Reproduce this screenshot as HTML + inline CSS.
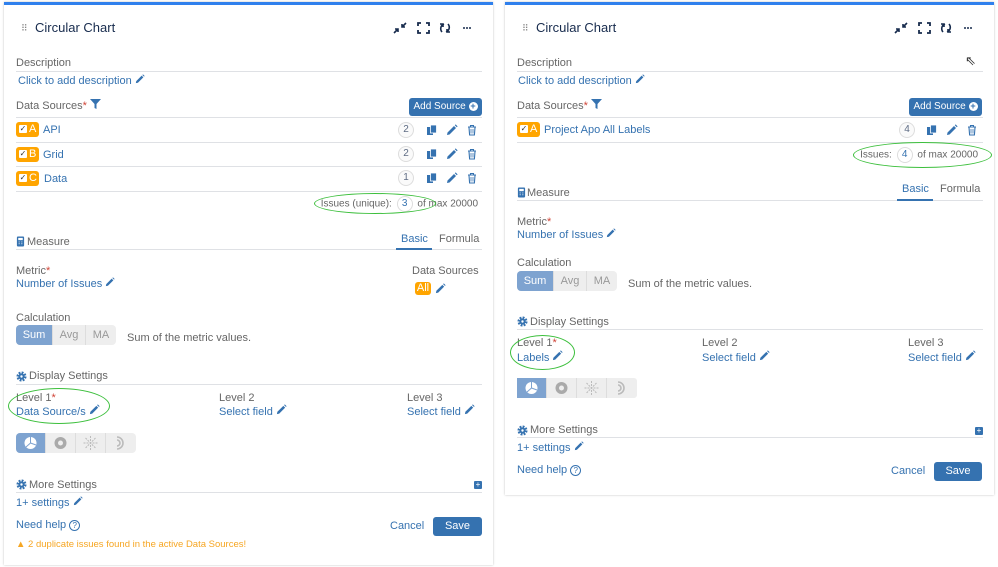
<!DOCTYPE html>
<html><head><meta charset="utf-8">
<style>
body{margin:0;width:998px;height:567px;background:#fff;position:relative;overflow:hidden;font-family:"Liberation Sans",sans-serif;}
.p{position:absolute;background:#fff;border-top:3px solid #2f80ed;box-shadow:0 0 2px rgba(0,0,0,.25);}
.t{position:absolute;font-size:11px;line-height:14px;color:#666;white-space:nowrap;}
.l{color:#3572b0;}
.ln{position:absolute;height:1px;background:#dfe1e5;}
.title{position:absolute;font-size:13px;color:#172b4d;line-height:16px;}
.btn{position:absolute;background:#3572b0;color:#fff;font-size:10px;border-radius:3px;text-align:center;white-space:nowrap;}
.badge{position:absolute;background:#ffa500;border-radius:3px;height:15px;color:#fff;font-size:11px;line-height:15px;}
.badge i{position:absolute;left:3px;top:3px;width:8px;height:8px;background:#fff;border-radius:1px;font-style:normal;color:#333;font-size:8px;line-height:8px;text-align:center;}
.badge b{position:absolute;left:13px;top:0;font-weight:normal;}
.cnt{position:absolute;width:14px;height:14px;border:1px solid #ddd;border-radius:50%;font-size:10px;line-height:14px;text-align:center;color:#5e6c84;background:#fafafa;}
.ell{position:absolute;border:1.5px solid #3cbf3c;border-radius:50%;}
.seg{position:absolute;height:20px;background:#eee;border-radius:4px;overflow:hidden;font-size:11px;color:#999;line-height:20px;}
.seg span{float:left;text-align:center;border-right:1px solid #ddd;height:20px;}
.seg .on{background:#7ea3d0;color:#fff;}
.ic{position:absolute;}
.red{color:#d04437;}
.iss{position:absolute;font-size:10px;line-height:14px;color:#666;white-space:nowrap;text-align:right;}
.iss span{display:inline-block;width:14px;height:14px;border:1px solid #ddd;border-radius:50%;text-align:center;color:#3572b0;vertical-align:middle;margin:0 2px;}
</style></head><body>

<svg width="0" height="0" style="position:absolute">
<defs>
<symbol id="pen" viewBox="0 0 12 12"><path d="M1 11 L1.5 8.5 L8 2 L10 4 L3.5 10.5 Z M8.8 1.2 L9.6 0.4 L11.6 2.4 L10.8 3.2 Z" fill="#3572b0"/></symbol>
<symbol id="copy" viewBox="0 0 12 12"><rect x="1" y="3" width="6" height="8" fill="#3572b0"/><rect x="4.5" y="1" width="6" height="8" fill="#3572b0" stroke="#fff" stroke-width="0.8"/></symbol>
<symbol id="trash" viewBox="0 0 12 12"><path d="M2 3h8M4.5 3V1.5h3V3M3 3.5l.6 7.5h4.8l.6-7.5" fill="none" stroke="#3572b0" stroke-width="1.1"/><path d="M5 5v4.5M7 5v4.5" stroke="#3572b0" stroke-width=".8"/></symbol>
<symbol id="gear" viewBox="0 0 12 12"><circle cx="6" cy="6" r="4.2" fill="none" stroke="#3572b0" stroke-width="2.6" stroke-dasharray="2 1.3"/><circle cx="6" cy="6" r="3.4" fill="#3572b0"/><circle cx="6" cy="6" r="1.3" fill="#fff"/></symbol>
<symbol id="calc" viewBox="0 0 10 12"><rect x="1" y="0.5" width="8" height="11" rx="1" fill="#3572b0"/><rect x="2.5" y="2" width="5" height="2.5" fill="#fff"/><path d="M3 6.5h1M6 6.5h1M3 8.5h1M6 8.5h1" stroke="#fff"/></symbol>
<symbol id="hdr" viewBox="0 0 90 14">
<path d="M2 12 L6 8 M3 8 L6 8 L6 11 M14 2 L10 6 M13 6 L10 6 L10 3" stroke="#172b4d" stroke-width="1.6" fill="none"/>
<path d="M26 5V2h3M34 2h3v3M37 9v3h-3M29 12h-3V9" stroke="#172b4d" stroke-width="1.8" fill="none"/>
<path d="M52 3a5 5 0 0 0-2 8M48 3h3v3M54 11a5 5 0 0 0 2-8M58 11h-3V8" stroke="#172b4d" stroke-width="1.6" fill="none"/>
<circle cx="72" cy="7" r="1" fill="#172b4d"/><circle cx="75" cy="7" r="1" fill="#172b4d"/><circle cx="78" cy="7" r="1" fill="#172b4d"/>
</symbol>
<symbol id="charts" viewBox="0 0 120 20">
<rect width="29" height="20" fill="#7ea3d0"/>
<circle cx="14.5" cy="10" r="6" fill="#fff"/><path d="M14.5 10V4M14.5 10L20 12M14.5 10L10 14" stroke="#7ea3d0" stroke-width="1"/>
<circle cx="44.5" cy="10" r="6" fill="#aaa"/><circle cx="44.5" cy="10" r="2.5" fill="#eee"/>
<path d="M74.5 3v14M67.5 10h14M69.5 5l10 10M79.5 5l-10 10" stroke="#bbb" stroke-width="1" stroke-dasharray="2 1"/>
<path d="M101 4a6 6 0 0 1 0 12M101 7a3 3 0 0 1 0 6" stroke="#bbb" stroke-width="1.6" fill="none"/>
<path d="M29.5 0v20M59.5 0v20M89.5 0v20" stroke="#ddd"/>
</symbol>
</defs></svg>

<!-- LEFT PANEL -->
<div class="p" style="left:4px;top:2px;width:489px;height:560px;"></div>
<div class="t" style="left:21px;top:21px;color:#888;font-size:9px;">⠿</div>
<div class="title" style="left:35px;top:20px;">Circular Chart</div>
<svg class="ic" style="left:392px;top:21px" width="90" height="14"><use href="#hdr"/></svg>

<div class="t" style="left:16px;top:56px;">Description</div>
<div class="ln" style="left:16px;top:71px;width:466px;"></div>
<div class="t l" style="left:18px;top:74px;">Click to add description <svg width="10" height="10"><use href="#pen"/></svg></div>

<div class="t" style="left:16px;top:99px;">Data Sources<span class="red">*</span> <svg width="11" height="10" viewBox="0 0 11 10"><path d="M0 0h11L6.5 5v5L4.5 9V5z" fill="#3572b0"/></svg></div>
<div class="btn" style="left:409px;top:98px;width:73px;height:18px;line-height:18px;">Add Source <span style="display:inline-block;width:9px;height:9px;border-radius:50%;background:#fff;color:#3572b0;font-size:9px;line-height:9px;font-weight:bold;">+</span></div>
<div class="ln" style="left:16px;top:117px;width:466px;"></div>

<div class="badge" style="left:16px;top:122px;width:23px;"><i>✓</i><b>A</b></div>
<div class="t l" style="left:43px;top:123px;">API</div>
<div class="cnt" style="left:398px;top:122px;">2</div>
<svg class="ic" style="left:426px;top:124px" width="12" height="12"><use href="#copy"/></svg>
<svg class="ic" style="left:446px;top:124px" width="12" height="12"><use href="#pen"/></svg>
<svg class="ic" style="left:466px;top:124px" width="12" height="12"><use href="#trash"/></svg>
<div class="ln" style="left:16px;top:142px;width:466px;"></div>

<div class="badge" style="left:16px;top:147px;width:23px;"><i>✓</i><b>B</b></div>
<div class="t l" style="left:43px;top:148px;">Grid</div>
<div class="cnt" style="left:398px;top:146px;">2</div>
<svg class="ic" style="left:426px;top:148px" width="12" height="12"><use href="#copy"/></svg>
<svg class="ic" style="left:446px;top:148px" width="12" height="12"><use href="#pen"/></svg>
<svg class="ic" style="left:466px;top:148px" width="12" height="12"><use href="#trash"/></svg>
<div class="ln" style="left:16px;top:166px;width:466px;"></div>

<div class="badge" style="left:16px;top:171px;width:23px;"><i>✓</i><b>C</b></div>
<div class="t l" style="left:44px;top:172px;">Data</div>
<div class="cnt" style="left:398px;top:170px;">1</div>
<svg class="ic" style="left:426px;top:172px" width="12" height="12"><use href="#copy"/></svg>
<svg class="ic" style="left:446px;top:172px" width="12" height="12"><use href="#pen"/></svg>
<svg class="ic" style="left:466px;top:172px" width="12" height="12"><use href="#trash"/></svg>
<div class="ln" style="left:16px;top:191px;width:466px;"></div>

<div class="iss" style="right:520px;top:196px;">Issues (unique): <span>3</span> of max 20000</div>
<div class="ell" style="left:314px;top:193px;width:120px;height:19px;"></div>

<svg class="ic" style="left:16px;top:236px" width="9" height="11"><use href="#calc"/></svg>
<div class="t" style="left:27px;top:235px;">Measure</div>
<div class="t l" style="left:401px;top:232px;">Basic</div>
<div class="t" style="left:439px;top:232px;">Formula</div>
<div class="ln" style="left:16px;top:249px;width:466px;"></div>
<div style="position:absolute;left:396px;top:248px;width:36px;height:2px;background:#3572b0;"></div>

<div class="t" style="left:16px;top:264px;">Metric<span class="red">*</span></div>
<div class="t l" style="left:16px;top:277px;">Number of Issues <svg width="10" height="10"><use href="#pen"/></svg></div>
<div class="t" style="left:412px;top:264px;">Data Sources</div>
<div class="badge" style="left:415px;top:282px;width:16px;height:13px;line-height:13px;text-align:center;">All</div>
<svg class="ic" style="left:435px;top:283px" width="11" height="11"><use href="#pen"/></svg>

<div class="t" style="left:16px;top:311px;">Calculation</div>
<div class="seg" style="left:16px;top:325px;width:100px;"><span class="on" style="width:36px">Sum</span><span style="width:32px">Avg</span><span style="width:30px;border:0">MA</span></div>
<div class="t" style="left:127px;top:331px;">Sum of the metric values.</div>

<svg class="ic" style="left:16px;top:371px" width="11" height="11"><use href="#gear"/></svg>
<div class="t" style="left:29px;top:369px;">Display Settings</div>
<div class="ln" style="left:16px;top:384px;width:466px;"></div>
<div class="t" style="left:16px;top:391px;">Level 1<span class="red">*</span></div>
<div class="t l" style="left:16px;top:404px;">Data Source/s <svg width="11" height="11"><use href="#pen"/></svg></div>
<div class="ell" style="left:8px;top:388px;width:100px;height:34px;"></div>
<div class="t" style="left:219px;top:391px;">Level 2</div>
<div class="t l" style="left:219px;top:404px;">Select field <svg width="11" height="11"><use href="#pen"/></svg></div>
<div class="t" style="left:407px;top:391px;">Level 3</div>
<div class="t l" style="left:407px;top:404px;">Select field <svg width="11" height="11"><use href="#pen"/></svg></div>
<svg class="ic" style="left:16px;top:433px;border-radius:4px" width="120" height="20"><rect width="120" height="20" fill="#eee" rx="3"/><use href="#charts"/></svg>

<svg class="ic" style="left:16px;top:479px" width="11" height="11"><use href="#gear"/></svg>
<div class="t" style="left:29px;top:478px;">More Settings</div>
<div style="position:absolute;left:474px;top:481px;width:8px;height:8px;background:#3572b0;border-radius:1px;color:#fff;font-size:8px;line-height:8px;text-align:center;">+</div>
<div class="ln" style="left:16px;top:492px;width:466px;"></div>
<div class="t l" style="left:16px;top:496px;">1+ settings <svg width="10" height="10"><use href="#pen"/></svg></div>
<div class="t l" style="left:16px;top:518px;">Need help <span style="display:inline-block;width:9px;height:9px;border:1px solid #3572b0;border-radius:50%;font-size:8px;line-height:9px;text-align:center;">?</span></div>
<div class="t l" style="left:390px;top:519px;">Cancel</div>
<div class="btn" style="left:433px;top:517px;width:49px;height:19px;line-height:19px;font-size:11px;">Save</div>
<div class="t" style="left:16px;top:538px;color:#f6a623;font-size:9.5px;">▲ 2 duplicate issues found in the active Data Sources!</div>

<!-- RIGHT PANEL -->
<div class="p" style="left:505px;top:2px;width:489px;height:490px;"></div>
<div class="t" style="left:522px;top:21px;color:#888;font-size:9px;">⠿</div>
<div class="title" style="left:536px;top:20px;">Circular Chart</div>
<svg class="ic" style="left:893px;top:21px" width="90" height="14"><use href="#hdr"/></svg>
<div class="t" style="left:965px;top:54px;color:#333;font-size:13px;">⇖</div>

<div class="t" style="left:517px;top:56px;">Description</div>
<div class="ln" style="left:517px;top:71px;width:466px;"></div>
<div class="t l" style="left:518px;top:74px;">Click to add description <svg width="10" height="10"><use href="#pen"/></svg></div>

<div class="t" style="left:517px;top:99px;">Data Sources<span class="red">*</span> <svg width="11" height="10" viewBox="0 0 11 10"><path d="M0 0h11L6.5 5v5L4.5 9V5z" fill="#3572b0"/></svg></div>
<div class="btn" style="left:909px;top:98px;width:73px;height:18px;line-height:18px;">Add Source <span style="display:inline-block;width:9px;height:9px;border-radius:50%;background:#fff;color:#3572b0;font-size:9px;line-height:9px;font-weight:bold;">+</span></div>
<div class="ln" style="left:517px;top:117px;width:466px;"></div>

<div class="badge" style="left:517px;top:122px;width:23px;"><i>✓</i><b>A</b></div>
<div class="t l" style="left:544px;top:123px;">Project Apo All Labels</div>
<div class="cnt" style="left:899px;top:122px;">4</div>
<svg class="ic" style="left:926px;top:124px" width="12" height="12"><use href="#copy"/></svg>
<svg class="ic" style="left:946px;top:124px" width="12" height="12"><use href="#pen"/></svg>
<svg class="ic" style="left:966px;top:124px" width="12" height="12"><use href="#trash"/></svg>
<div class="ln" style="left:517px;top:142px;width:466px;"></div>

<div class="iss" style="right:20px;top:147px;">Issues: <span>4</span> of max 20000</div>
<div class="ell" style="left:853px;top:142px;width:137px;height:24px;"></div>

<svg class="ic" style="left:517px;top:187px" width="9" height="11"><use href="#calc"/></svg>
<div class="t" style="left:527px;top:186px;">Measure</div>
<div class="t l" style="left:902px;top:182px;">Basic</div>
<div class="t" style="left:940px;top:182px;">Formula</div>
<div class="ln" style="left:517px;top:200px;width:466px;"></div>
<div style="position:absolute;left:897px;top:199px;width:36px;height:2px;background:#3572b0;"></div>

<div class="t" style="left:517px;top:215px;">Metric<span class="red">*</span></div>
<div class="t l" style="left:517px;top:228px;">Number of Issues <svg width="10" height="10"><use href="#pen"/></svg></div>

<div class="t" style="left:517px;top:256px;">Calculation</div>
<div class="seg" style="left:517px;top:271px;width:100px;"><span class="on" style="width:36px">Sum</span><span style="width:32px">Avg</span><span style="width:30px;border:0">MA</span></div>
<div class="t" style="left:628px;top:277px;">Sum of the metric values.</div>

<svg class="ic" style="left:517px;top:316px" width="11" height="11"><use href="#gear"/></svg>
<div class="t" style="left:530px;top:315px;">Display Settings</div>
<div class="ln" style="left:517px;top:329px;width:466px;"></div>
<div class="t" style="left:517px;top:336px;">Level 1<span class="red">*</span></div>
<div class="t l" style="left:517px;top:350px;">Labels <svg width="11" height="11"><use href="#pen"/></svg></div>
<div class="ell" style="left:510px;top:335px;width:63px;height:33px;"></div>
<div class="t" style="left:702px;top:336px;">Level 2</div>
<div class="t l" style="left:702px;top:350px;">Select field <svg width="11" height="11"><use href="#pen"/></svg></div>
<div class="t" style="left:908px;top:336px;">Level 3</div>
<div class="t l" style="left:908px;top:350px;">Select field <svg width="11" height="11"><use href="#pen"/></svg></div>
<svg class="ic" style="left:517px;top:378px" width="120" height="20"><rect width="120" height="20" fill="#eee" rx="3"/><use href="#charts"/></svg>

<svg class="ic" style="left:517px;top:425px" width="11" height="11"><use href="#gear"/></svg>
<div class="t" style="left:530px;top:423px;">More Settings</div>
<div style="position:absolute;left:975px;top:427px;width:8px;height:8px;background:#3572b0;border-radius:1px;color:#fff;font-size:8px;line-height:8px;text-align:center;">+</div>
<div class="ln" style="left:517px;top:437px;width:466px;"></div>
<div class="t l" style="left:517px;top:441px;">1+ settings <svg width="10" height="10"><use href="#pen"/></svg></div>
<div class="t l" style="left:517px;top:463px;">Need help <span style="display:inline-block;width:9px;height:9px;border:1px solid #3572b0;border-radius:50%;font-size:8px;line-height:9px;text-align:center;">?</span></div>
<div class="t l" style="left:891px;top:464px;">Cancel</div>
<div class="btn" style="left:934px;top:462px;width:48px;height:19px;line-height:19px;font-size:11px;">Save</div>

</body></html>
